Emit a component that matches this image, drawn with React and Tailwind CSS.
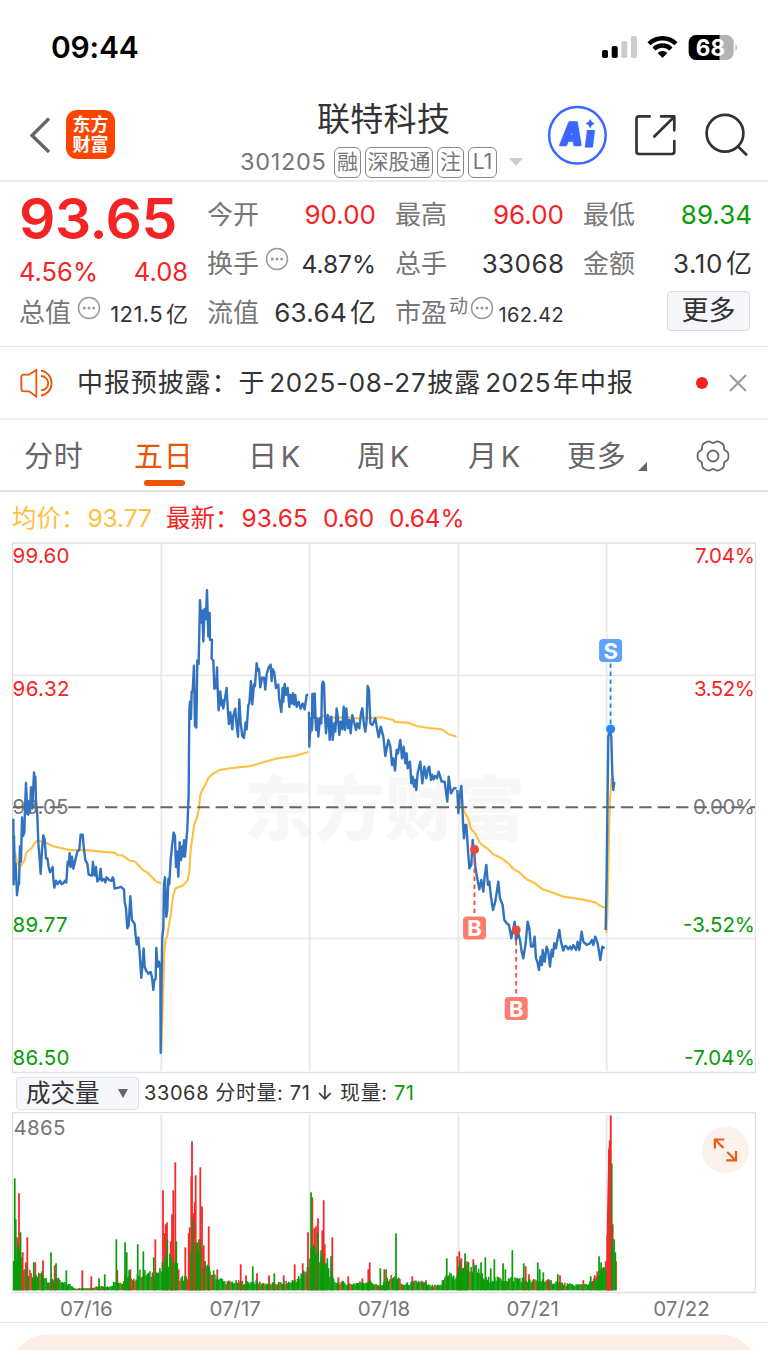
import React from "react";

const stats = [
  [
    { label: "今开", value: "90.00", color: "text-[#f52424]" },
    { label: "换手", value: "4.87%", info: true, size: "text-[24.5px]" },
    { label: "流值", value: "63.64", unit: "亿", size: "text-[26px] tracking-[0.3px]" },
  ],
  [
    { label: "最高", value: "96.00", color: "text-[#f52424]" },
    { label: "总手", value: "33068", size: "text-[26px] tracking-[0.4px] -mr-[0.4px]" },
    { label: "市盈", sup: "动", value: "162.42", info: true, size: "text-[20px] tracking-[0.3px]" },
  ],
  [
    { label: "最低", value: "89.34", color: "text-[#089c08]" },
    { label: "金额", value: "3.10", unit: "亿", size: "text-[26px] tracking-[0.6px]" },
  ],
];

const tabs = [
  { name: "分时", box: "w-[109px] pl-6" },
  { name: "五日", box: "w-[114px] pl-[25px]", active: true },
  { name: "日K", box: "w-[109px] pl-[25px]" },
  { name: "周K", box: "w-[112px] pl-[25px]" },
  { name: "月K", box: "w-[123px] pl-6" },
];

// intraday price, 07/16 and 07/17
const priceEarly = [
  "40,810 41,1000 42,860 45,985 47,940 51,1032 54,1005 57,1000 60,890 63,935 66,806 69,860 73,850 75,780 78,706 82,795 85,798 88,760 90,790 93,718 97,780 102,675 104,690 106,688 108,760 112,800 115,880 120,940 122,970 126,900 130,858 134,870 138,925 142,925 146,950 150,965 158,950 160,985 163,1010 168,990 173,1000 180,990 185,1000 190,997 195,990 199,995 203,935 206,945 209,910 212,950 216,920 220,955 226,930 232,905 238,900 242,856 248,856 251,890 256,930 262,940 266,972 276,975 279,935 282,970 285,975 288,950 292,992 298,985 302,955 305,990 312,985 316,995 320,980 328,988 335,990 338,980 341,985 344,1013 355,1010 363,1008 372,1015 374,1050 378,1070 382,1128 386,1120 391,1035 396,1105 404,1115 407,1150 410,1175 415,1155 419,1200 424,1272 428,1230 431,1187 434,1240 438,1250 445,1260 452,1255 456,1270 460,1307 463,1280 467,1275 469,1185 473,1240 477,1225 481,1245 482,1490 486,1200 487,1150 490,1130 492,1000 495,980 499,1095 502,1075 505,985 508,1000 512,930 516,890 521,850 525,860 528,950 531,905 535,978 539,878 543,930 547,890 549,920 552,872 555,920 562,840 566,740 568,500 570,470 573,520 575,440 578,440 582,365 585,540 589,545 592,350 596,360 600,175 604,240 607,205 610,295 614,200 618,230 621,146 625,280 629,212 630,290 636,290 635,345 640,350 643,432 648,430 651,370 653,430 656,495 661,440 664,480 667,465 670,490 680,430 684,500 687,535 691,500 697,550 700,510 706,490 709,530 714,572 718,463 722,530 727,570 732,575 737,530 740,550 745,480 748,475 753,410 757,478 762,420 765,425 770,358 774,380 777,375 781,428 786,400 792,400 796,435 800,390 806,370 812,362 815,410 818,375 823,385 828,430 832,425 835,420 838,465 844,500 848,430 850,470 854,418 858,450 863,430 868,485 871,450 875,475 879,445 882,478 886,450 890,485 896,470 902,490 908,475 914,492 920,450 925,450",
];

const avgEarly = [
  "45,910 50,930 58,948 64,946 74,930 78,910 85,903 95,895 105,880 112,874 135,878 160,890 210,901 260,901 345,909 352,915 368,917 390,932 405,934 430,960 445,968 468,992 483,997",
  "484,1490 490,1300 493,1200 497,1160 502,1150 512,1090 520,1030 527,1012 550,1003 562,990 568,965 572,900 578,860 583,825 590,810 597,780 600,745 605,730 617,710 624,693 640,678 660,668 690,663 750,657 790,646 830,635 880,628 925,616",
];

// intraday price, 07/18 onwards
const priceLate = [
  "27,185 28,290 32,205 36,240 37,132 41,205 44,130 48,240 52,205 55,260 60,205 64,220 66,105 69,95 72,100 75,200 78,250 83,195 86,205 89,270 94,200 98,270 103,220 106,245 110,175 114,205 118,255 122,215 127,238 131,170 135,240 139,175 144,235 148,210 152,250 157,195 162,215 168,240 172,220 178,235 183,190 187,175 192,225 196,245 200,210 203,108 207,120 211,220 217,225 226,205 231,235 236,262 242,230 250,260 256,318 265,270 271,290 276,345 280,325 285,362 290,300 294,310 301,270 306,325 311,290 316,340 320,310 323,355 330,335 334,400 338,380 342,410 345,390 349,420 353,370 361,335 367,400 373,350 379,385 384,355 388,350 393,390 397,375 401,388 405,378 411,385 416,365 425,395 434,395 442,455 446,380 453,430 462,415 470,415",
  "472,420 475,490 479,440 484,408 487,460 489,520 492,565 495,525 499,525 504,600 508,655 514,645 518,570 523,610 526,650 531,680 538,718 544,690 550,725 554,680 559,645 564,705 568,695 573,740 579,780 586,755 595,695 600,745 608,765 613,810 620,820 627,825 634,865 644,815 648,870 655,850 660,870 665,905 670,925 677,880 683,815 688,835 693,890 699,890 704,860 708,925 712,935 717,960 722,920 726,945 728,900 734,935 740,890 745,905 750,950 755,900 758,920 763,880 768,895 773,865 778,840 783,875 790,902 795,888 800,890 805,898 810,890 815,898 820,885 828,900 833,875 838,900 845,845 850,875 860,885 870,880 876,870 880,885 886,860 893,880 901,930 907,890 914,895",
  "917,840 920,680 925,260 930,240 934,260 937,370 940,420 943,395",
];

const avgLate = [
  "33,250 40,215 50,210 70,198 80,197 100,203 140,202 180,206 245,202 280,210 285,216 325,218 350,228 385,234 420,237 435,243 445,252 470,260",
  "472,440 484,465 495,488 504,505 513,537 525,550 540,578 550,588 565,598 580,613 605,625 625,640 638,655 660,669 680,688 705,700 728,718 755,727 790,740 850,749 885,757 905,770 915,772",
  "919,850 922,800 927,560 930,450 935,385 943,390",
];

// typical volume level along the x axis
const level = [
  [13, 45], [20, 45], [22, 26], [28, 20], [33, 14], [40, 18], [44, 16], [50, 9], [56, 15], [60, 9], [70, 6],
  [76, 2], [90, 3], [100, 5], [110, 4], [117, 12], [122, 7], [127, 18], [133, 9], [137, 18], [143, 19], [150, 17],
  [155, 20], [160, 20], [168, 36], [175, 36], [180, 14], [187, 13], [193, 48], [200, 40], [208, 22], [215, 17],
  [225, 9], [240, 9], [255, 9], [270, 7], [290, 9], [300, 14], [308, 26], [312, 50], [318, 36], [328, 24], [334, 10],
  [350, 7], [370, 10], [380, 4], [390, 14], [398, 14], [402, 6], [420, 10], [430, 5], [440, 5], [448, 20], [455, 13],
  [460, 25], [466, 28], [475, 24], [485, 12], [500, 12], [520, 13], [530, 10], [540, 11], [555, 9], [570, 6], [580, 6],
  [590, 8], [596, 12], [600, 21], [606, 22], [612, 50], [617, 26],
];

const greenSpikes = [
  [14.7, 112], [15.7, 71], [20.5, 58], [18, 45], [33.7, 28], [42, 19], [51, 38], [56, 27], [66.3, 20], [99, 12],
  [104.7, 16], [116.3, 51], [125, 48], [126.7, 38], [129, 20], [137.7, 46], [143.3, 39], [153.7, 33], [167.3, 51],
  [171.3, 33], [176.3, 49], [192.3, 71], [196.7, 33], [200, 51], [209.3, 23], [252.7, 24], [274.3, 17], [311, 98],
  [318, 57], [321, 40], [327.3, 32], [331, 34], [396, 57], [380.3, 22], [386, 21], [446.7, 32], [465, 37], [460, 30],
  [481, 28], [485.3, 33], [494.3, 31], [490.7, 22], [503, 27], [505.3, 21], [512.3, 40], [523.7, 27], [537.7, 28],
  [539.7, 21], [543.3, 18], [557.7, 16], [590.7, 14], [599, 34], [601, 28], [611.7, 127], [614, 51], [615.3, 38],
];

const redSpikes = [
  [19, 97], [17.3, 53], [22.7, 38], [27.3, 53], [26, 28], [35.3, 28], [43, 30], [54.7, 25], [82.3, 20], [91.3, 14],
  [117.3, 20], [130.3, 21], [155.3, 51], [163, 100], [164.3, 57], [165.7, 66], [167, 68], [170.7, 49], [172, 76],
  [173.3, 100], [175.3, 128], [185.3, 43], [188.7, 57], [189.7, 63], [191.3, 114], [192, 149], [193.3, 77],
  [194.7, 88], [195.7, 115], [199, 51], [200.3, 123], [202, 84], [203.7, 45], [205, 29], [208.7, 64], [217.3, 21],
  [240.7, 26], [246, 15], [257, 17], [269, 15], [283.7, 15], [294.7, 26], [302.7, 27], [308, 58], [312.3, 93],
  [314.3, 62], [316, 64], [318, 72], [322.3, 60], [323.7, 90], [324.7, 46], [332.3, 53], [338.3, 13], [348.3, 14],
  [362.3, 12], [369.7, 28], [368.3, 21], [384.3, 21], [412.3, 14], [426, 10], [457.3, 34], [459.3, 39], [461.3, 32],
  [467, 29], [473.3, 31], [463.3, 21], [498.3, 13], [525.7, 24], [529, 16], [549.3, 9], [560, 15], [583.3, 10],
  [594.7, 15], [597.3, 19], [605.7, 29], [607.3, 56], [608.3, 73], [608.9, 141], [609.7, 150], [610.7, 175],
  [612.7, 66], [616, 29],
];

const levelAt = (x) => {
  const i = level.findIndex((p) => p[0] >= x);
  if (i <= 0) return level[0][1];
  const [x0, h0] = level[i - 1];
  const [x1, h1] = level[i];
  return h0 + ((h1 - h0) * (x - x0)) / (x1 - x0);
};

const noise = (n) => {
  const v = Math.sin(n * 12.9898) * 43758.5453;
  return v - Math.floor(v);
};

// stretches where buying dominates are mostly red
const isRising = (x) => (x > 187 && x < 191) || (x > 193.5 && x < 196) || (x > 201 && x < 203);

const fillBars = [];
for (let i = 0; i < 480; i++) {
  const x = 13.6 + i * 1.25;
  if (x > 616) break;
  fillBars.push({
    x,
    h: Math.max(1.5, levelAt(x) * (0.65 + noise(i) * 0.5)),
    red: isRising(x) || noise(i + 500) > 0.84,
  });
}

// gear outline with six soft lobes
const gearPath =
  Array.from({ length: 72 }, (_, i) => {
    const a = (i * Math.PI) / 36;
    const r = 14.6 + 1.2 * Math.cos(6 * a) - 0.4 * Math.cos(12 * a);
    return `${i ? "L" : "M"}${(18 + r * Math.cos(a)).toFixed(2)} ${(18 + r * Math.sin(a)).toFixed(2)}`;
  }).join("") + "Z";

const Info = () => (
  <svg className="h-6 w-6 shrink-0" viewBox="0 0 24 24">
    <circle cx="12" cy="12" r="10.5" fill="none" stroke="#999" strokeWidth="1.5" />
    <circle cx="7.3" cy="12" r="1.5" fill="#999" />
    <circle cx="12" cy="12" r="1.5" fill="#999" />
    <circle cx="16.7" cy="12" r="1.5" fill="#999" />
  </svg>
);

const StatusBar = () => (
  <div className="flex h-[95px] items-center justify-between pl-[51px] pr-[29px]">
    <span className="text-[30px] font-semibold tracking-[-0.2px] text-black">09:44</span>
    <div className="flex items-center">
      <svg className="h-[26px] w-[36px]" viewBox="602 35 36 26">
        <rect x="602" y="50" width="6" height="8" rx="1.8" fill="#000" />
        <rect x="611.7" y="46" width="6" height="12" rx="1.8" fill="#000" />
        <rect x="621.3" y="41" width="6" height="17" rx="1.8" fill="#ccc" />
        <rect x="631" y="36" width="6" height="22" rx="1.8" fill="#ccc" />
      </svg>
      <svg className="ml-[9px] h-[26px] w-[31px]" viewBox="0 0 31 26" fill="none" stroke="#000" strokeWidth="4.4">
        <path d="M2 8.7a19.3 19.3 0 0 1 27 0" />
        <path d="M7 14a12 12 0 0 1 17 0" />
        <path d="M10.6 18a7.2 7.2 0 0 1 9.8 0l-4.9 5z" fill="#000" stroke="none" />
      </svg>
      <svg className="ml-[10px] h-[26px] w-[51px]" viewBox="688 35 51 26">
        <clipPath id="battery">
          <rect x="688.7" y="35" width="45" height="25" rx="7.5" />
        </clipPath>
        <g clipPath="url(#battery)">
          <rect x="688" y="35" width="46" height="25" fill="#b3b3b3" />
          <rect x="688" y="35" width="31.5" height="25" fill="#000" />
        </g>
        <path d="M735.5 43.5q3 3.7 0 8z" fill="#b3b3b3" />
        <text x="710.5" y="55.5" textAnchor="middle" fontSize="22.5" fontWeight="700" fill="#fff">
          68
        </text>
      </svg>
    </div>
  </div>
);

const Header = () => (
  <div className="flex h-[87px] items-start border-b-2 border-[#ececec] pl-7 pr-5">
    <svg className="mt-[22px] h-9 w-6" viewBox="0 0 24 36" fill="none" stroke="#666" strokeWidth="3.4">
      <path d="M21 1.5L4 18.5L21 35" />
    </svg>
    <div className="ml-[14px] mt-[15px] flex h-[49px] w-[49px] flex-col items-center justify-center rounded-[11px] bg-[#ff4400] text-[18px] font-bold leading-[20px] text-white">
      <span>东方</span>
      <span>财富</span>
    </div>
    <div className="ml-[125px] flex w-[284px] flex-col">
      <div className="pl-[77px] pt-[2px] text-[33px] leading-[44px] tracking-[0.3px] text-[#333]">联特科技</div>
      <div className="mt-[5px] flex h-8 items-center text-[21px] text-[#777]">
        <span className="w-[94px] text-[23.5px] tracking-[0.7px]">301205</span>
        <span className="mr-1 flex h-[31px] w-[27px] items-center justify-center rounded-[6px] border border-[#888]">融</span>
        <span className="mr-1 flex h-[31px] w-[68px] items-center justify-center rounded-[6px] border border-[#888]">深股通</span>
        <span className="mr-1 flex h-[31px] w-[27px] items-center justify-center rounded-[6px] border border-[#888]">注</span>
        <span className="flex h-[31px] w-[29px] items-center justify-center rounded-[6px] border border-[#888]">L1</span>
        <svg className="ml-[12px] h-2 w-[14px]" viewBox="0 0 14 8">
          <path d="M0 0h14L7 8z" fill="#ccc" />
        </svg>
      </div>
    </div>
    <svg className="ml-[23px] mt-[10px] h-[60px] w-[60px]" viewBox="547 105 60 60">
      <circle cx="577.4" cy="135.3" r="28.3" fill="none" stroke="#3a68ff" strokeWidth="2.5" />
      <g fill="#3a68ff" stroke="#3a68ff" strokeLinejoin="round" fontWeight="900">
        <text transform="translate(559.5 145) skewX(-7)" strokeWidth="2.4" fontSize="31" textLength="21.5" lengthAdjust="spacingAndGlyphs">A</text>
        <text transform="translate(583.7 147) skewX(-7)" strokeWidth="1.2" fontSize="30" textLength="10" lengthAdjust="spacingAndGlyphs">ı</text>
      </g>
      <path d="M590.2 119q1.200 3.400 4.600 4.600q-3.400 1.200-4.600 4.600q-1.200-3.400-4.600-4.600q3.400-1.200 4.600-4.600z" fill="#3a68ff" />
    </svg>
    <svg className="ml-[27px] mt-[19px] h-11 w-11" viewBox="634 114 44 44" fill="none" stroke="#333" strokeWidth="2.7" strokeLinecap="round" strokeLinejoin="round">
      <path d="M649.7 116.300H639a2.500 2.500 0 0 0-2.500 2.500v32.700a2.500 2.500 0 0 0 2.500 2.500H671.800a2.500 2.500 0 0 0 2.500-2.500V141" />
      <path d="M661 116.300h13.300v14M674 117l-19.700 19.500" />
    </svg>
    <svg className="ml-[26px] mt-[17px] h-[46px] w-11" viewBox="704 112 44 46" fill="none" stroke="#333" strokeWidth="2.7" strokeLinecap="round">
      <circle cx="725" cy="133.3" r="18.4" />
      <path d="M738.5 147l7.700 7.500" />
    </svg>
  </div>
);

const Stat = ({ item }) => (
  <div className="flex h-[49px] items-baseline justify-between">
    <span className="-ml-px flex items-baseline text-[26px] text-[#777]">
      {item.label}
      {item.sup && <span className="relative -top-[9px] ml-[2px] text-[19px]">{item.sup}</span>}
      {item.info && (
        <span className={item.sup ? "relative -top-[2px] ml-[2px]" : "relative -top-[2px] ml-[6px]"}>
          <Info />
        </span>
      )}
    </span>
    <span className={`${item.size || "text-[26px]"} ${item.color || "text-[#333]"}`}>
      {item.value}
      {item.unit && <span className="ml-[3px] tracking-normal">{item.unit}</span>}
    </span>
  </div>
);

const Quote = () => (
  <div className="grid h-[165px] grid-cols-4 gap-5 border-b border-[#e4e4ea] pl-5 pr-4">
    <div className="flex flex-col text-[#f52424]">
      <div className="-ml-px mt-[8px] text-[57px] font-semibold leading-[58px] tracking-[-0.5px]">93.65</div>
      <div className="-ml-px mt-[8px] flex justify-between text-[25.5px] leading-8">
        <span>4.56%</span>
        <span>4.08</span>
      </div>
      <div className="mt-[5px]">
        <Stat item={{ label: "总值", value: "121.5", unit: "亿", info: true, size: "text-[22px] tracking-[0.4px]" }} />
      </div>
    </div>
    {stats.map((col, i) => (
      <div key={i} className="pt-[13px]">
        {col.map((item) => (
          <Stat key={item.label} item={item} />
        ))}
        {i === 2 && (
          <button className="-mt-[2px] ml-[83px] flex h-10 w-[83px] items-center justify-center rounded-[4px] border border-[#dcdde4] bg-[#f6f7fa] text-[27px] text-[#333]">
            更多
          </button>
        )}
      </div>
    ))}
  </div>
);

const Notice = () => (
  <div className="flex h-[73px] items-center border-b-2 border-[#efefef] pl-[19px] pr-[21px]">
    <svg className="h-[34px] w-[37px]" viewBox="57 555 111 102" fill="none" stroke="#e8590c" strokeWidth="5.5" strokeLinejoin="round">
      <path d="M109 566L87 581H72q-8 0-8 8V623q0 8 8 8H87L109 647z" />
      <path d="M123 585a21 21 0 0 1 0 43M123 569a38 38 0 0 1 0 75" />
    </svg>
    <span className="ml-[21px] whitespace-nowrap text-[26px] tracking-[0.9px] text-[#333]">
      中报预披露：于<span className="ml-1 mr-px tracking-[0.7px]">2025-08-27</span>披露
      <span className="ml-1 mr-[2px] tracking-[0.5px]">2025</span>年中报
    </span>
    <span className="ml-auto h-3 w-3 rounded-full bg-[#f52424]" />
    <svg className="ml-[21px] h-[18px] w-[18px]" viewBox="0 0 18 18" stroke="#999" strokeWidth="2">
      <path d="M1 1l16 16M17 1L1 17" />
    </svg>
  </div>
);

const Tabs = () => (
  <div className="flex h-[72px] border-b-2 border-[#e3e3ea] text-[29px] leading-[73px] tracking-[0.8px] text-[#666]">
    {tabs.map((t) => (
      <div key={t.name} className={`relative ${t.box} ${t.active ? "text-[#ea5404]" : ""}`}>
        {t.name.endsWith("K") ? (
          <>
            {t.name[0]}
            <span className="ml-[3px]">K</span>
          </>
        ) : (
          t.name
        )}
        {t.active && <span className="absolute left-[35px] top-[60px] h-[6px] w-[41px] rounded-full bg-[#ea5404]" />}
      </div>
    ))}
    <div className="flex w-[129px]">
      更多
      <svg className="ml-[11px] mt-[42px] h-[9px] w-[9px]" viewBox="0 0 9 9">
        <path d="M9 0v9H0z" fill="#666" />
      </svg>
    </div>
    <svg className="-ml-[1px] mt-[18px] h-9 w-9" viewBox="0 0 36 36" fill="none" stroke="#666" strokeWidth="1.8">
      <path d={gearPath} />
      <circle cx="18" cy="18" r="5.5" />
    </svg>
  </div>
);

const Marker = ({ x, y, dotY, letter, fill, dot }) => (
  <g>
    <path
      d={y < dotY ? `M${x} ${y + 13}V${dotY - 3}` : `M${x} ${dotY + 3}V${y - 12}`}
      stroke={dot}
      strokeWidth="1.8"
      strokeDasharray="4.5 3.5"
    />
    <circle cx={x} cy={dotY} r="4.5" fill={dot} />
    <rect x={x - 11.5} y={y - 11.5} width="23" height="23" rx="4" fill={fill} />
    <text x={x} y={y + 8} textAnchor="middle" fontSize="22" fontWeight="700" fill="#fff">
      {letter}
    </text>
  </g>
);

const Line = ({ points, stroke, width }) =>
  points.map((p, i) => (
    <polyline
      key={i}
      points={p}
      fill="none"
      stroke={stroke}
      strokeWidth={width}
      strokeLinejoin="round"
      vectorEffect="non-scaling-stroke"
    />
  ));

const PriceChart = () => (
  <svg className="ml-3 block h-[532px] w-[744px]" viewBox="12 542 744 532">
    <text x="244" y="835" fontSize="70" fontWeight="900" fill="#f7f7f7" textLength="281">
      东方财富
    </text>
    <path d="M12 543H756M12.5 543V1073M755.5 543V1073M12 1072.5H756" stroke="#e0e1e8" strokeWidth="1.5" fill="none" />
    <path d="M13 675.5H755M13 938.5H755M161.3 544V1071M309.6 544V1071M458.5 544V1071M606.7 544V1071" stroke="#e6e7ef" strokeWidth="1.7" />

    <g fontSize="20.5">
      <text x="12.5" y="563" fill="#f52424" textLength="57">99.60</text>
      <text x="12.5" y="695.5" fill="#f52424" textLength="57">96.32</text>
      <text x="12.5" y="814" fill="#777" textLength="56">93.05</text>
      <text x="12.5" y="932" fill="#089c08" textLength="55">89.77</text>
      <text x="12.5" y="1064.5" fill="#089c08" textLength="57">86.50</text>
      <text x="695" y="563" fill="#f52424" textLength="60">7.04%</text>
      <text x="694" y="695.5" fill="#f52424" textLength="61">3.52%</text>
      <text x="693" y="814" fill="#777" textLength="62">0.00%</text>
      <text x="683" y="932" fill="#089c08" textLength="72">-3.52%</text>
      <text x="684" y="1064.5" fill="#089c08" textLength="71">-7.04%</text>
    </g>

    <g transform="translate(0 540) scale(0.3333 0.3442)">
      <Line points={avgEarly} stroke="#fdbf45" width="2.1" />
      <Line points={priceEarly} stroke="#3273c0" width="2.4" />
    </g>
    <g transform="translate(300 650) scale(0.3333)">
      <Line points={avgLate} stroke="#fdbf45" width="2.1" />
      <Line points={priceLate} stroke="#3273c0" width="2.4" />
    </g>
    <path d="M13 807.3H755" stroke="#666" strokeWidth="2" strokeDasharray="12.3 6.12" />

    <Marker x={474.5} y={928} dotY={849.5} letter="B" fill="#ff7d6e" dot="#e8493f" />
    <Marker x={516.2} y={1008.5} dotY={930} letter="B" fill="#ff7d6e" dot="#e8493f" />
    <Marker x={610.6} y={650.5} dotY={729} letter="S" fill="#5ea2fc" dot="#2b83f3" />
  </svg>
);

const VolumeChart = () => (
  <svg className="ml-3 block h-[182px] w-[744px]" viewBox="12 1112 744 182">
    <path d="M12 1112.5H756M12.5 1112V1292M755.5 1112V1291M12 1292.5H756" stroke="#e0e1e8" strokeWidth="1.5" fill="none" />
    <path d="M161.3 1114.5V1291M309.6 1114.5V1291M458.5 1114.5V1291M606.7 1114.5V1291" stroke="#e6e7ef" strokeWidth="1.7" />
    <text x="13.5" y="1134.5" fontSize="20.5" fill="#777" textLength="52">4865</text>
    {redSpikes.map(([x, h]) => (
      <rect key={x} x={x - 0.9} y={1290.3 - h} width="1.8" height={h} fill="#f52a2a" />
    ))}
    {fillBars.map((b) => (
      <rect key={b.x} x={b.x - 0.7} y={1290.3 - b.h} width="1.5" height={b.h} fill={b.red ? "#f52a2a" : "#089c08"} />
    ))}
    {greenSpikes.map(([x, h]) => (
      <rect key={x} x={x - 0.8} y={1290.3 - h} width="1.7" height={h} fill="#089c08" />
    ))}
    <path d="M606.8 1290V1225L608.3 1150L610 1140V1116H611.3V1290z" fill="#f52a2a" />
    <circle cx="725.5" cy="1150" r="23.5" fill="#fdf1eb" />
    <path d="M723.5 1148l-8.500-8.500M714.900 1148.500v-9h9.400M727.200 1152l8.500 8.500M736 1151v9.400h-9.800" fill="none" stroke="#ea5c10" strokeWidth="2.200" />
  </svg>
);

const App = () => {
  return (
    <div className="h-[1351px] w-[768px] overflow-hidden bg-white font-['Inter','Noto_Sans_CJK_SC',sans-serif]">
      <StatusBar />
      <Header />
      <Quote />
      <Notice />
      <Tabs />

      {/* LEGEND */}
      <div className="flex h-[50px] items-center whitespace-nowrap pl-3 pt-[2px] text-[24.5px] text-[#f52424]">
        <span className="w-[154px] text-[#fdbf45]">
          均价：<span className="ml-[2px] tracking-[-0.1px]">93.77</span>
        </span>
        <span className="w-[157px]">
          最新：<span className="ml-[2px]">93.65</span>
        </span>
        <span className="w-[66px] tracking-[-0.2px]">0.60</span>
        <span className="tracking-[-0.2px]">0.64%</span>
      </div>

      <PriceChart />

      {/* VOLUME HEADER */}
      <div className="flex h-[38px] items-center pl-4">
        <button className="flex h-[33px] w-[123px] items-center rounded-[4px] border border-[#dfe0e8] bg-[#f6f7fa] pl-[9px] text-[24.5px] text-[#333]">
          成交量
          <svg className="ml-[18px] h-[9px] w-[10px]" viewBox="0 0 10 9">
            <path d="M0 0h10L5 9z" fill="#666" />
          </svg>
        </button>
        <span className="ml-[5px] whitespace-pre text-[20px] tracking-[0.6px] text-[#333]">
          33068 分时量: 71 ↓ 现量: <span className="text-[#089c08]">71</span>
        </span>
      </div>

      <VolumeChart />

      {/* DATES */}
      <div className="mx-3 grid h-[28px] grid-cols-5 items-center text-center text-[20.5px] text-[#777]">
        {["07/16", "07/17", "07/18", "07/21", "07/22"].map((d) => (
          <span key={d}>{d}</span>
        ))}
      </div>
      <div className="border-t border-[#e4e4e4] px-[14px] pt-[12px]">
        <div className="h-[15px] overflow-hidden">
          <div className="h-[76px] rounded-[30px] bg-[#fdeee5]" />
        </div>
      </div>
    </div>
  );
};

export default App;
